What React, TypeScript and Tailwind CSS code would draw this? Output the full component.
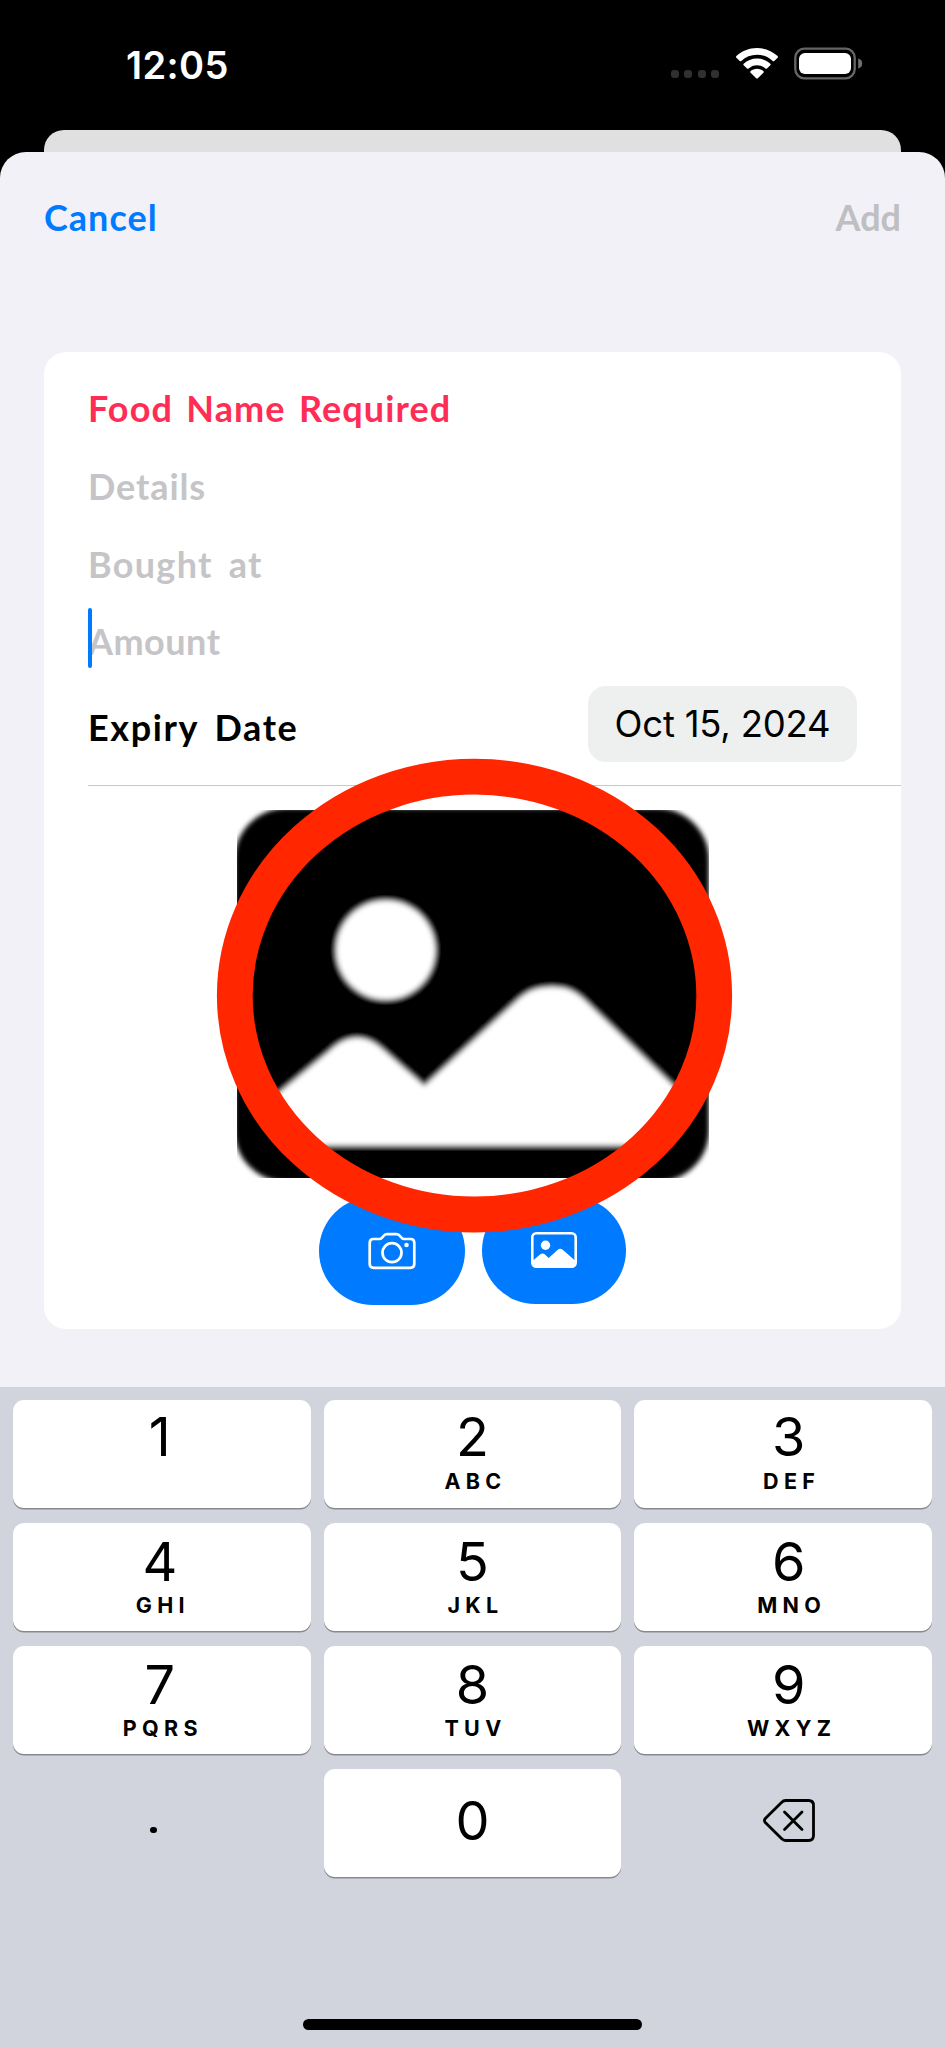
import React from "react";

function StatusBar() {
  return (
    <div className="flex h-[130px] justify-between pr-[82px] pl-[126px] font-[Inter,sans-serif]">
      <span className="mt-[40.500px] h-[48px] text-[38px] leading-[48px] font-semibold tracking-[0.400px] text-white">12:05</span>
      <div className="flex">
        <div className="mt-[70px] mr-[16px] flex h-2 gap-[5.300px]">
          {[0, 1, 2, 3].map((i) => (
            <span key={i} className="size-2 rounded-[3px] bg-[#303030]" />
          ))}
        </div>
        <svg className="mt-[47px]" width="44" height="33" viewBox="0 0 44 33" fill="#fff">
          <path d="M22 1C30 1 37.300 4 42.600 9.100Q43.400 9.900 42.600 10.700L39.300 14Q38.500 14.700 37.700 14C33.500 10 28 7.800 22 7.800S10.500 10 6.300 14Q5.500 14.700 4.700 14L1.400 10.700Q.6 9.900 1.400 9.100C6.700 4 14 1 22 1Z" />
          <path d="M22 11.500C27.200 11.500 31.800 13.500 35.300 16.700Q36.100 17.500 35.300 18.300L32 21.500Q31.200 22.200 30.400 21.500C28.100 19.400 25.200 18.200 22 18.200S15.900 19.400 13.600 21.500Q12.800 22.200 12 21.500L8.700 18.300Q7.900 17.500 8.700 16.700C12.200 13.500 16.800 11.500 22 11.500Z" />
          <path d="M22 21.800C24.400 21.800 26.600 22.700 28.300 24.100Q29.200 24.900 28.400 25.700L22.800 31.300Q22 32.100 21.200 31.300L15.600 25.700Q14.800 24.900 15.700 24.100C17.400 22.700 19.600 21.800 22 21.800Z" />
        </svg>
        <svg className="mt-[47px] ml-[15px]" width="69" height="33" viewBox="0 0 69 33">
          <rect x="1.300" y="1.700" width="59.400" height="29.600" rx="9" fill="none" stroke="#666" strokeWidth="2.300" />
          <rect x="5" y="6" width="52" height="21" rx="6" fill="#fff" />
          <path d="M64.200 11.500C67 12 68.200 14 68.200 16.500S67 21 64.200 21.500Z" fill="#707070" />
        </svg>
      </div>
    </div>
  );
}

const fields = [
  { label: "Food Name Required", style: "text-[#ff2d55] tracking-[1.100px] [word-spacing:3.500px]" },
  { label: "Details", style: "text-[#c5c5c7] tracking-[0.900px]" },
  { label: "Bought at", style: "text-[#c5c5c7] tracking-[1.300px] [word-spacing:6px]" },
  { label: "Amount", style: "text-[#c5c5c7] tracking-[0.500px]" },
];

function PhotoPlaceholder() {
  return (
    <svg width="472" height="368.500" viewBox="237 810 472 368.500">
      <defs>
        <filter id="soft" x="-10%" y="-10%" width="120%" height="120%">
          <feGaussianBlur stdDeviation="2.400" />
        </filter>
      </defs>
      <g filter="url(#soft)">
        <rect x="234.500" y="808" width="474.500" height="374" rx="52" fill="#000" />
        <circle cx="385.700" cy="950" r="49.500" fill="#fff" />
        <path
          d="M262 1107L329 1051.500C338 1043.500 345 1038 357 1038S376 1043.500 385 1051.500L424.300 1086L517 1000.500C528 990.500 537 987 552 987S575 991 586 1001.500L688 1100L650 1145.500H300Z"
          fill="#fff"
        />
      </g>
    </svg>
  );
}

function CameraIcon() {
  return (
    <svg width="48" height="38" viewBox="0 0 48 38" fill="none" stroke="#fff" strokeWidth="2.700" strokeLinejoin="round">
      <path d="M5.500 7H11.500C13.500 7 14.300 5.500 15.300 4.200C16.500 2.600 17.500 2.200 19 2.200H28.500C30 2.200 31 2.600 32.200 4.200C33.200 5.500 34 7 36 7H42.500Q46.300 7 46.300 10.800V32Q46.300 35.800 42.500 35.800H5.500Q1.700 35.800 1.700 32V10.800Q1.700 7 5.500 7Z" />
      <circle cx="24" cy="20.700" r="9.500" />
      <circle cx="38.500" cy="13" r="2.300" fill="#fff" stroke="none" />
    </svg>
  );
}

function PhotoIcon() {
  return (
    <svg width="46" height="36" viewBox="0 0 46 36">
      <rect x="1.300" y="1.300" width="43.400" height="33.400" rx="4" fill="none" stroke="#fff" strokeWidth="2.600" />
      <circle cx="14.500" cy="13.300" r="4.700" fill="#fff" />
      <path d="M2 28.500L9 22.500Q11.500 20.300 14 22.500L17.700 26L26.500 18Q29.300 15.500 32 18L44 28.500V31Q44 35 40 35H6Q2 35 2 31Z" fill="#fff" />
    </svg>
  );
}

const keys = [
  ["1", ""], ["2", "ABC"], ["3", "DEF"],
  ["4", "GHI"], ["5", "JKL"], ["6", "MNO"],
  ["7", "PQRS"], ["8", "TUV"], ["9", "WXYZ"],
];

const nudges = ["pr-[4px]", "", "pl-[11px]"];

const keyBase = "flex h-[107.500px] flex-col items-center rounded-[11px] bg-white shadow-[0_1.500px_0_#88898e]";

function Keypad() {
  return (
    <div className="flex h-[661.500px] flex-col bg-[#d1d4dc] px-[13px] pt-[13.500px] font-[Inter,sans-serif] text-black">
      <div className="grid grid-cols-3 gap-x-[13px] gap-y-[15.500px]">
        {keys.map(([digit, letters], i) => (
          <div key={digit} className={`${keyBase} ${nudges[i % 3]} ${i < 3 ? "pt-[6.500px]" : "pt-[8.500px]"}`}>
            <span className="h-[60px] text-[54px] leading-[60px]">{digit}</span>
            <span className={`h-[24px] pl-[6px] text-[21.500px] leading-[24px] font-bold tracking-[5.300px] ${i < 3 ? "mt-[2.500px]" : "mt-[1.500px]"}`}>
              {letters}
            </span>
          </div>
        ))}
        <div className="flex h-[107.500px] justify-center pr-[17px] pt-[57.500px]">
          <span className="size-[6.500px] rounded-full bg-black" />
        </div>
        <div className={`${keyBase} pt-[21.500px]`}>
          <span className="h-[60px] text-[54px] leading-[60px]">0</span>
        </div>
        <div className="flex h-[107.500px] justify-center pt-[29.500px] pl-[12px]">
          <svg width="52" height="43" viewBox="0 0 52 43" fill="none" stroke="#000" strokeWidth="2.800" strokeLinejoin="round" strokeLinecap="round">
            <path d="M22.500 1.500H45.500Q50.500 1.500 50.500 6.500V36.500Q50.500 41.500 45.500 41.500H22.500Q20.500 41.500 18.500 39.500L2.300 23.500Q.6 21.500 2.300 19.500L18.500 3.500Q20.500 1.500 22.500 1.500Z" />
            <path d="M21.500 13L39 30.500M39 13L21.500 30.500" />
          </svg>
        </div>
      </div>
      <div className="mt-[142.500px] h-[11px] w-[339px] self-center rounded-full bg-black" />
    </div>
  );
}

export default function App() {
  return (
    <div className="relative h-[2048px] w-[945px] overflow-hidden bg-black font-[Lato,sans-serif] text-[36px]">
      <StatusBar />
      <div className="mx-[44px] h-[22px] rounded-t-[20px] bg-[#e0e0e0]" />
      <div className="flex h-[1234.500px] flex-col rounded-t-[26px] bg-[#f2f1f7] px-[44px]">
        <div className="flex h-[200px] justify-between pt-[40px] leading-[50px] font-bold">
          <span className="tracking-[1px] text-[#007aff]">Cancel</span>
          <span className="text-[#bfbfc2]">Add</span>
        </div>
        <div className="flex h-[977px] flex-col rounded-[22px] bg-white pt-[17.500px] pl-[44px] font-bold">
          {fields.map(({ label, style }, i) => (
            <div key={label} className="relative flex h-[77.670px] items-center">
              {i === 3 && <span className="absolute top-[6px] left-0 h-[60px] w-[4px] rounded-full bg-[#007aff]" />}
              <span className={style}>{label}</span>
            </div>
          ))}
          <div className="flex h-[105.500px] shrink-0 justify-between border-b border-[#c8c8ca] pt-[6px] pr-[44px]">
            <span className="mt-[16px] h-[50px] leading-[50px] tracking-[1.600px] text-black [word-spacing:6px]">Expiry Date</span>
            <div className="flex h-[75.500px] w-[269px] items-center justify-center rounded-[18px] bg-[#eef0ef] font-[Inter,sans-serif] text-[36.500px] font-normal tracking-[-0.200px] text-black">
              Oct 15, 2024
            </div>
          </div>
          <div className="mt-[24px] mr-[44px] flex justify-center">
            <PhotoPlaceholder />
          </div>
          <div className="mt-[18.500px] mr-[44px] flex justify-center gap-[17.500px]">
            <button className="flex h-[108px] w-[146px] items-center justify-center rounded-full bg-[#007aff]">
              <CameraIcon />
            </button>
            <button className="flex h-[107px] w-[144px] items-center justify-center rounded-full bg-[#007aff]">
              <PhotoIcon />
            </button>
          </div>
        </div>
      </div>
      <Keypad />
      <svg className="absolute top-[757px] left-[216px]" width="518" height="478" viewBox="216 757 518 478" fill="none">
        <ellipse cx="474.500" cy="995.600" rx="239.700" ry="218.900" stroke="#ff2600" strokeWidth="35.800" />
      </svg>
    </div>
  );
}
